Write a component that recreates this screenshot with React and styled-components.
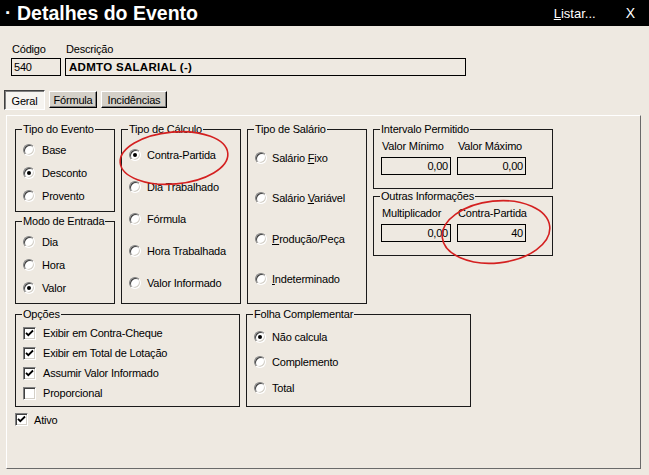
import styled, { createGlobalStyle } from 'styled-components';

const BG = '#eee9e1';

const GlobalStyle = createGlobalStyle`
  body { margin: 0; background: ${BG}; }
  * { box-sizing: border-box; }
`;

const Window = styled.div`
  position: relative;
  width: 649px;
  height: 475px;
  overflow: hidden;
  background: ${BG};
  font-family: "Liberation Sans", Arial, sans-serif;
  font-size: 11px;
  letter-spacing: -0.2px;
  color: #000;
`;

const TitleBar = styled.div`
  height: 26px;
  background: #000;
  color: #fff;
  display: flex;
  align-items: center;
  padding: 0 14px 0 5px;
`;

const Bullet = styled.span`
  width: 12px;
  font-size: 19px;
  font-weight: bold;
`;

const Title = styled.h1`
  margin: 0;
  font-size: 19.5px;
  font-weight: bold;
  letter-spacing: 0;
`;

const Menu = styled.div`
  margin-left: auto;
  display: flex;
  align-items: center;
  gap: 30px;
  font-size: 13px;
  letter-spacing: 0;
`;

const CloseX = styled.span`
  font-size: 14px;
`;

const Header = styled.div`
  display: flex;
  gap: 4px;
  padding: 17px 0 0 11px;
`;

const Field = styled.div`
  display: flex;
  flex-direction: column;
  gap: 2px;
`;

const Label = styled.span`
  line-height: 13px;
  padding-left: ${p => p.$indent || 0}px;
`;

const TextBox = styled.div`
  width: ${p => p.$w}px;
  height: 18px;
  border: 1px solid #000;
  background: ${BG};
  line-height: 16px;
  padding: 0 2px 0 ${p => (p.$bold ? 3 : 2)}px;
  text-align: ${p => (p.$right ? 'right' : 'left')};
  font-weight: ${p => (p.$bold ? 'bold' : 'normal')};
  letter-spacing: ${p => (p.$bold ? '0.3px' : '-0.2px')};
  font-size: ${p => (p.$bold ? '11.5px' : '11px')};
  white-space: nowrap;
`;

const Tabs = styled.div`
  display: flex;
  align-items: flex-start;
  gap: 4px;
  padding: 14px 0 0 4px;
`;

const Tab = styled.div`
  width: ${p => p.$w}px;
  height: ${p => (p.$active ? 20 : 17)}px;
  margin-top: ${p => (p.$active ? 0 : 1)}px;
  display: flex;
  align-items: center;
  justify-content: center;
  padding-top: ${p => (p.$active ? 2 : 0)}px;
  background: ${p => (p.$active ? '#f6f4f0' : '#d4d0c8')};
  border: 1px solid;
  border-color: ${p => (p.$active ? '#404040 #fff #fff #404040' : '#fff #000 #000 #fff')};
  box-shadow: ${p => (p.$active ? 'inset 1px 1px #808080' : 'inset -1px -1px #808080')};
`;

const Panel = styled.div`
  margin: 5px 0 0 6px;
  width: 635px;
  height: 354px;
  border: 1px solid;
  border-color: #fff #6a6a6a #6a6a6a #fff;
  padding: 7px 0 0 8px;
`;

const TopGrid = styled.div`
  display: grid;
  grid-template-columns: 100px 120px 120px 180px;
  column-gap: 6px;
  height: 181px;
`;

const Stack = styled.div`
  display: flex;
  flex-direction: column;
  gap: ${p => p.$gap}px;
`;

const BottomGrid = styled.div`
  display: grid;
  grid-template-columns: 225px 225px;
  column-gap: 6px;
  height: 99px;
  margin-top: 4px;
`;

const Group = styled.fieldset`
  margin: 0;
  min-width: 0;
  height: ${p => p.$h}px;
  border: 1px solid #1a1a1a;
  padding: ${p => p.$pt}px 4px 0 7px;
`;

const Legend = styled.legend`
  padding: 0 1px;
  margin-left: -1px;
  line-height: 13px;
  font-size: 11px;
`;

const Option = styled.div`
  display: flex;
  align-items: center;
  gap: ${p => p.$gap || 7}px;
  height: ${p => p.$row}px;
  white-space: nowrap;
`;

const Radio = styled.span`
  flex: none;
  width: 12px;
  height: 12px;
  border-radius: 50%;
  background: #fff;
  border: 1px solid;
  border-color: #808080 #fff #fff #808080;
  box-shadow: inset 1px 1px #404040, inset -1px -1px #d4d0c8;
  display: grid;
  place-items: center;
  &::after {
    content: '';
    width: 4px;
    height: 4px;
    border-radius: 50%;
    background: ${p => (p.$on ? '#000' : 'transparent')};
  }
`;

const Box = styled.span`
  flex: none;
  width: 13px;
  height: 13px;
  background: #fff;
  border: 1px solid;
  border-color: #808080 #fff #fff #808080;
  box-shadow: inset 1px 1px #404040, inset -1px -1px #d4d0c8;
  display: grid;
  place-items: center;
`;

const ValueGrid = styled.div`
  display: grid;
  grid-template-columns: 70px 69px;
  column-gap: 6px;
`;

const ValueCol = styled.div`
  display: flex;
  flex-direction: column;
  gap: 4px;
`;

const ValueLabel = styled.span`
  line-height: 14px;
  padding-left: 1px;
  white-space: nowrap;
`;

const AtivoRow = styled.div`
  display: flex;
  align-items: center;
  gap: 6px;
  height: 13px;
  margin-top: 6px;
`;

const Annotation = styled.svg`
  position: absolute;
  inset: 0;
  pointer-events: none;
`;

const Check = () => (
  <svg width="9" height="9" viewBox="0 0 9 9">
    <path d="M1 3.8 L3.3 6.2 L8 1.5" fill="none" stroke="#000" strokeWidth="1.8" />
  </svg>
);

const RadioOpt = ({ on, row, gap, children }) => (
  <Option $row={row} $gap={gap}>
    <Radio $on={on} />
    <span>{children}</span>
  </Option>
);

const CheckOpt = ({ on, children }) => (
  <Option $row={20}>
    <Box>{on && <Check />}</Box>
    <span>{children}</span>
  </Option>
);

const Value = ({ label, value, w }) => (
  <ValueCol>
    <ValueLabel>{label}</ValueLabel>
    <TextBox $w={w} $right>{value}</TextBox>
  </ValueCol>
);

const u = ch => <u>{ch}</u>;

export default function App() {
  return (
    <Window>
      <GlobalStyle />
      <TitleBar>
        <Bullet>·</Bullet>
        <Title>Detalhes do Evento</Title>
        <Menu>
          <span>{u('L')}istar...</span>
          <CloseX>X</CloseX>
        </Menu>
      </TitleBar>

      <Header>
        <Field>
          <Label $indent={1}>Código</Label>
          <TextBox $w={50}>540</TextBox>
        </Field>
        <Field>
          <Label $indent={1}>Descrição</Label>
          <TextBox $w={401} $bold>ADMTO SALARIAL (-)</TextBox>
        </Field>
      </Header>

      <Tabs>
        <Tab $w={41} $active>Geral</Tab>
        <Tab $w={48}>Fórmula</Tab>
        <Tab $w={66}>Incidências</Tab>
      </Tabs>

      <Panel>
        <TopGrid>
          <Stack $gap={3}>
            <Group $h={89} $pt={2}>
              <Legend>Tipo do Evento</Legend>
              <RadioOpt row={23}>Base</RadioOpt>
              <RadioOpt row={23} on>Desconto</RadioOpt>
              <RadioOpt row={23}>Provento</RadioOpt>
            </Group>
            <Group $h={89} $pt={2}>
              <Legend>Modo de Entrada</Legend>
              <RadioOpt row={23}>Dia</RadioOpt>
              <RadioOpt row={23}>Hora</RadioOpt>
              <RadioOpt row={23} on>Valor</RadioOpt>
            </Group>
          </Stack>

          <Group $h={181} $pt={3}>
            <Legend>Tipo de Cálculo</Legend>
            <RadioOpt row={32} gap={6} on>Contra-Partida</RadioOpt>
            <RadioOpt row={32} gap={6}>Dia Trabalhado</RadioOpt>
            <RadioOpt row={32} gap={6}>Fórmula</RadioOpt>
            <RadioOpt row={32} gap={6}>Hora Trabalhada</RadioOpt>
            <RadioOpt row={32} gap={6}>Valor Informado</RadioOpt>
          </Group>

          <Group $h={181} $pt={2}>
            <Legend>Tipo de Salário</Legend>
            <RadioOpt row={40.3} gap={5}>Salário {u('F')}ixo</RadioOpt>
            <RadioOpt row={40.3} gap={5}>Salário {u('V')}ariável</RadioOpt>
            <RadioOpt row={40.3} gap={5}>{u('P')}rodução/Peça</RadioOpt>
            <RadioOpt row={40.3} gap={5}>{u('I')}ndeterminado</RadioOpt>
          </Group>

          <Stack $gap={1}>
            <Group $h={66} $pt={3}>
              <Legend>Intervalo Permitido</Legend>
              <ValueGrid>
                <Value label="Valor Mínimo" value="0,00" w={70} />
                <Value label="Valor Máximo" value="0,00" w={69} />
              </ValueGrid>
            </Group>
            <Group $h={66} $pt={3}>
              <Legend>Outras Informações</Legend>
              <ValueGrid>
                <Value label="Multiplicador" value="0,00" w={70} />
                <Value label="Contra-Partida" value="40" w={69} />
              </ValueGrid>
            </Group>
          </Stack>
        </TopGrid>

        <BottomGrid>
          <Group $h={99} $pt={2}>
            <Legend>Opções</Legend>
            <CheckOpt on>Exibir em Contra-Cheque</CheckOpt>
            <CheckOpt on>Exibir em Total de Lotação</CheckOpt>
            <CheckOpt on>Assumir Valor Informado</CheckOpt>
            <CheckOpt>Proporcional</CheckOpt>
          </Group>
          <Group $h={99} $pt={3}>
            <Legend>Folha Complementar</Legend>
            <RadioOpt row={25.5} gap={6} on>Não calcula</RadioOpt>
            <RadioOpt row={25.5} gap={6}>Complemento</RadioOpt>
            <RadioOpt row={25.5} gap={6}>Total</RadioOpt>
          </Group>
        </BottomGrid>

        <AtivoRow>
          <Box><Check /></Box>
          <span>Ativo</span>
        </AtivoRow>
      </Panel>

      <Annotation width="649" height="475" viewBox="0 0 649 475">
        <g fill="none" stroke="#d42020" strokeWidth="1.6">
          <ellipse cx="174" cy="158" rx="54" ry="26" transform="rotate(-5 174 158)" />
          <ellipse cx="496" cy="232" rx="54" ry="31" transform="rotate(-6 496 232)" />
        </g>
      </Annotation>
    </Window>
  );
}
